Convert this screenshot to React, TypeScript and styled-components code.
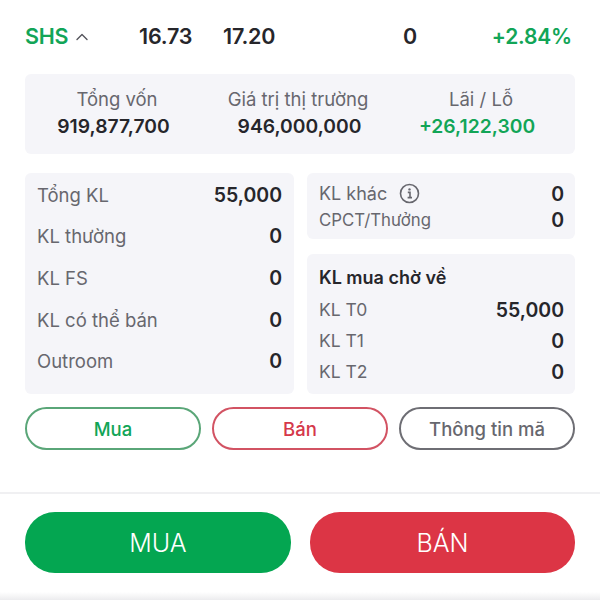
import React from 'react'
import styled, { createGlobalStyle } from 'styled-components'

const GREEN = '#12a557'
const RED = '#d5384a'
const INK = '#26262b'
const MUTED = '#67676e'
const PANEL = '#f5f5f9'

const Global = createGlobalStyle`
  html, body { margin: 0; padding: 0; background: #fff; }
  body { font-family: Inter, "Noto Sans", sans-serif; }
  * { box-sizing: border-box; }
`

const Page = styled.div`
  width: 600px;
  height: 600px;
  overflow: hidden;
  position: relative;
  background: #fff;
  display: flex;
  flex-direction: column;
`

const Header = styled.div`
  height: 74px;
  padding: 0 28px 2px 25px;
  display: grid;
  grid-template-columns: 114px 84px 150px 74px 1fr;
  align-items: center;
  font-size: 21.5px;
  font-weight: 600;
  color: ${INK};
  letter-spacing: -0.2px;
`

const Symbol = styled.div`
  display: flex;
  align-items: center;
  gap: 7px;
  color: ${GREEN};
`

const HeaderZero = styled.div`
  text-align: center;
`

const Change = styled.div`
  text-align: right;
  color: ${GREEN};
  font-size: 21px;
`

const Summary = styled.div`
  margin: 0 25px;
  height: 80px;
  background: ${PANEL};
  border-radius: 6px;
  display: grid;
  grid-template-columns: 177px 192px 166px;
  padding-top: 14px;
`

const SummaryItem = styled.div`
  display: flex;
  flex-direction: column;
  align-items: center;
  gap: 5px;
`

const SummaryLabel = styled.div<{ $indent?: number }>`
  font-size: 18.5px;
  line-height: 22px;
  color: ${MUTED};
  white-space: nowrap;
  padding-left: ${p => p.$indent || 0}px;
`

const SummaryValue = styled.div<{ $color?: string; $indent?: number }>`
  font-size: 19.3px;
  line-height: 22px;
  font-weight: 600;
  color: ${p => p.$color || INK};
  padding-left: ${p => p.$indent || 0}px;
`

const Columns = styled.div`
  margin: 19px 25px 0;
  display: grid;
  grid-template-columns: 269px 268px;
  column-gap: 13px;
  height: 221px;
`

const Panel = styled.div`
  background: ${PANEL};
  border-radius: 6px;
`

const HoldingPanel = styled(Panel)`
  padding: 1px 12px 0;
  display: flex;
  flex-direction: column;
`

const RightColumn = styled.div`
  display: flex;
  flex-direction: column;
  gap: 15px;
`

const OtherPanel = styled(Panel)`
  height: 66px;
  padding: 8px 11px 0 12px;
`

const PendingPanel = styled(Panel)`
  flex: 1;
  padding: 13px 11px 0 12px;
`

const Row = styled.div<{ $height: number }>`
  height: ${p => p.$height}px;
  display: flex;
  align-items: center;
  justify-content: space-between;
`

const RowLabel = styled.div<{ $size?: number }>`
  display: flex;
  align-items: center;
  gap: 12px;
  font-size: ${p => p.$size || 18.5}px;
  color: ${MUTED};
`

const RowValue = styled.div`
  font-size: 19.5px;
  font-weight: 600;
  color: ${INK};
`

const PendingTitle = styled.div`
  font-size: 18px;
  line-height: 22px;
  font-weight: 600;
  color: ${INK};
  margin-bottom: 5px;
`

const Actions = styled.div`
  margin: 13px 25px 0;
  display: grid;
  grid-template-columns: repeat(3, 176px);
  column-gap: 11px;
`

const OutlineButton = styled.button<{ $color: string; $text?: string }>`
  height: 43px;
  border-radius: 22px;
  border: 2px solid ${p => p.$color};
  background: #fff;
  color: ${p => p.$text || p.$color};
  font-family: inherit;
  font-size: 18.5px;
  font-weight: 500;
  padding: 0;
`

const Footer = styled.div`
  margin-top: 42px;
  border-top: 2px solid #f0f0f2;
  padding: 18px 25px 0;
  display: grid;
  grid-template-columns: 266px 265px;
  column-gap: 19px;
`

const BigButton = styled.button<{ $color: string }>`
  height: 61px;
  border: 0;
  border-radius: 30px;
  background: ${p => p.$color};
  color: #fff;
  font-family: inherit;
  font-size: 25px;
  font-weight: 300;
  padding: 0;
`

const BottomShade = styled.div`
  position: absolute;
  left: 0;
  right: 0;
  bottom: 0;
  height: 8px;
  background: linear-gradient(#fff, #ececee);
`

const Chevron = () => (
  <svg width="14" height="9" viewBox="0 0 14 9" fill="none">
    <path d="M2 7.5L7 2.5L12 7.5" stroke="#55555c" strokeWidth="1.4" strokeLinecap="round" strokeLinejoin="round" />
  </svg>
)

const InfoIcon = () => (
  <svg width="21" height="21" viewBox="0 0 21 21" fill="none">
    <circle cx="10.5" cy="10.5" r="9" stroke={MUTED} strokeWidth="1.6" />
    <circle cx="10.5" cy="6.4" r="1.2" fill={MUTED} />
    <path d="M8.8 9.4H11V14.4M8.6 14.6H13" stroke={MUTED} strokeWidth="1.6" />
  </svg>
)

const holdings = [
  ['Tổng KL', '55,000'],
  ['KL thường', '0'],
  ['KL FS', '0'],
  ['KL có thể bán', '0'],
  ['Outroom', '0'],
]

const pending = [
  ['KL T0', '55,000'],
  ['KL T1', '0'],
  ['KL T2', '0'],
]

export default function App() {
  return (
    <Page>
      <Global />
      <Header>
        <Symbol>SHS <Chevron /></Symbol>
        <div>16.73</div>
        <div>17.20</div>
        <HeaderZero>0</HeaderZero>
        <Change>+2.84%</Change>
      </Header>

      <Summary>
        <SummaryItem>
          <SummaryLabel $indent={7}>Tổng vốn</SummaryLabel>
          <SummaryValue>919,877,700</SummaryValue>
        </SummaryItem>
        <SummaryItem>
          <SummaryLabel>Giá trị thị trường</SummaryLabel>
          <SummaryValue $indent={3}>946,000,000</SummaryValue>
        </SummaryItem>
        <SummaryItem>
          <SummaryLabel $indent={8}>Lãi / Lỗ</SummaryLabel>
          <SummaryValue $color={GREEN}>+26,122,300</SummaryValue>
        </SummaryItem>
      </Summary>

      <Columns>
        <HoldingPanel>
          {holdings.map(([label, value]) => (
            <Row key={label} $height={41.6}>
              <RowLabel>{label}</RowLabel>
              <RowValue>{value}</RowValue>
            </Row>
          ))}
        </HoldingPanel>
        <RightColumn>
          <OtherPanel>
            <Row $height={25}>
              <RowLabel $size={18}>KL khác <InfoIcon /></RowLabel>
              <RowValue>0</RowValue>
            </Row>
            <Row $height={27}>
              <RowLabel $size={16.8}>CPCT/Thưởng</RowLabel>
              <RowValue>0</RowValue>
            </Row>
          </OtherPanel>
          <PendingPanel>
            <PendingTitle>KL mua chờ về</PendingTitle>
            {pending.map(([label, value]) => (
              <Row key={label} $height={31}>
                <RowLabel $size={17.5}>{label}</RowLabel>
                <RowValue>{value}</RowValue>
              </Row>
            ))}
          </PendingPanel>
        </RightColumn>
      </Columns>

      <Actions>
        <OutlineButton $color="#5aa678" $text={GREEN}>Mua</OutlineButton>
        <OutlineButton $color="#d25363" $text={RED}>Bán</OutlineButton>
        <OutlineButton $color="#6e6e74" $text={MUTED}>Thông tin mã</OutlineButton>
      </Actions>

      <Footer>
        <BigButton $color="#04a651">MUA</BigButton>
        <BigButton $color="#dc3545">BÁN</BigButton>
      </Footer>
      <BottomShade />
    </Page>
  )
}
